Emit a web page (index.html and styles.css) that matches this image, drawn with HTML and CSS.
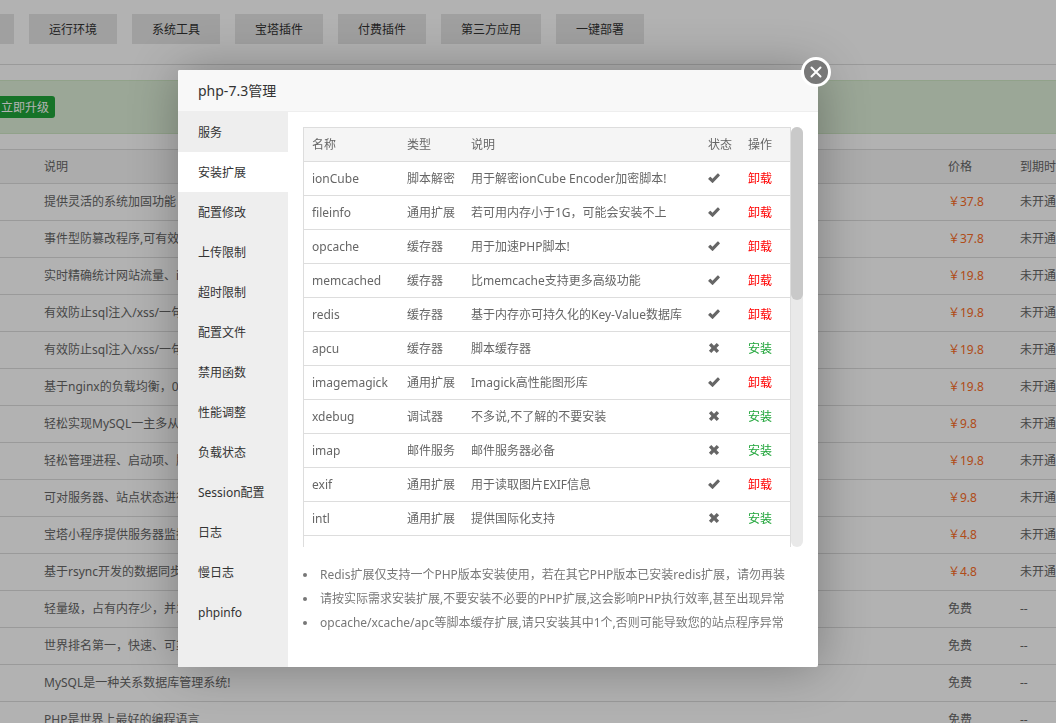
FILE: index.html
```html
<!DOCTYPE html>
<html lang="zh-CN">
<head>
<meta charset="utf-8">
<title>php-7.3管理</title>
<link rel="stylesheet" href="styles.css">
</head>
<body>
<svg class="sprite" aria-hidden="true">
  <symbol id="ok" viewBox="0 0 12 12"><path d="M.4 6.500 1.900 5q.4-.4.8 0l1.800 1.700L9.500 1.600q.4-.4.8 0l1.400 1.300q.4.4 0 .8L5 10.700q-.5.4-.9 0L.4 7.300q-.4-.4 0-.8Z"/></symbol>
  <symbol id="no" viewBox="0 0 12 12"><path d="M3.300 1 6 3.700 8.700 1 11.100 3.300 8.500 6l2.600 2.700L8.700 11 6 8.300 3.300 11 .9 8.700 3.500 6 .9 3.300Z"/></symbol>
</svg>
<main class="page">
  <nav class="tabs">
    <button class="tab tab-cut" aria-label="全部"></button>
    <button class="tab">运行环境</button>
    <button class="tab">系统工具</button>
    <button class="tab">宝塔插件</button>
    <button class="tab">付费插件</button>
    <button class="tab">第三方应用</button>
    <button class="tab">一键部署</button>
  </nav>
  <div class="alert"><button class="upgrade">立即升级</button></div>
  <table class="soft">
    <colgroup><col class="c-pad"><col><col class="c-price"><col class="c-end"></colgroup>
    <thead><tr><th></th><th>说明</th><th>价格</th><th>到期时间</th></tr></thead>
    <tbody>
      <tr><td></td><td>提供灵活的系统加固功能</td><td class="price">￥37.8</td><td>未开通</td></tr>
      <tr><td></td><td>事件型防篡改程序,可有效</td><td class="price">￥37.8</td><td>未开通</td></tr>
      <tr><td></td><td>实时精确统计网站流量、ip</td><td class="price">￥19.8</td><td>未开通</td></tr>
      <tr><td></td><td>有效防止sql注入/xss/一句话</td><td class="price">￥19.8</td><td>未开通</td></tr>
      <tr><td></td><td>有效防止sql注入/xss/一句话</td><td class="price">￥19.8</td><td>未开通</td></tr>
      <tr><td></td><td>基于nginx的负载均衡，0</td><td class="price">￥19.8</td><td>未开通</td></tr>
      <tr><td></td><td>轻松实现MySQL一主多从</td><td class="price">￥9.8</td><td>未开通</td></tr>
      <tr><td></td><td>轻松管理进程、启动项、服务</td><td class="price">￥19.8</td><td>未开通</td></tr>
      <tr><td></td><td>可对服务器、站点状态进行</td><td class="price">￥9.8</td><td>未开通</td></tr>
      <tr><td></td><td>宝塔小程序提供服务器监控</td><td class="price">￥4.8</td><td>未开通</td></tr>
      <tr><td></td><td>基于rsync开发的数据同步</td><td class="price">￥4.8</td><td>未开通</td></tr>
      <tr><td></td><td>轻量级，占有内存少，并发</td><td>免费</td><td>--</td></tr>
      <tr><td></td><td>世界排名第一，快速、可靠</td><td>免费</td><td>--</td></tr>
      <tr><td></td><td>MySQL是一种关系数据库管理系统!</td><td>免费</td><td>--</td></tr>
      <tr><td></td><td>PHP是世界上最好的编程语言</td><td>免费</td><td>--</td></tr>
    </tbody>
  </table>
</main>
<div class="shade"></div>
<section class="modal" role="dialog" aria-labelledby="title">
  <h2 class="title" id="title">php-7.3管理</h2>
  <button class="close" aria-label="关闭"><svg viewBox="0 0 30 30"><circle cx="15" cy="15" r="13.500"/><path d="m10.500 10.500 9 9m0-9-9 9"/></svg></button>
  <div class="body">
    <nav class="menu">
      <button>服务</button>
      <button class="on">安装扩展</button>
      <button>配置修改</button>
      <button>上传限制</button>
      <button>超时限制</button>
      <button>配置文件</button>
      <button>禁用函数</button>
      <button>性能调整</button>
      <button>负载状态</button>
      <button>Session配置</button>
      <button>日志</button>
      <button>慢日志</button>
      <button>phpinfo</button>
    </nav>
    <div class="content">
      <div class="scroller">
        <div class="frame">
          <table class="ext">
            <colgroup><col class="e-name"><col class="e-type"><col><col class="e-state"><col class="e-act"></colgroup>
            <thead><tr><th>名称</th><th>类型</th><th>说明</th><th>状态</th><th>操作</th></tr></thead>
            <tbody>
              <tr><td>ionCube</td><td>脚本解密</td><td>用于解密ionCube Encoder加密脚本!</td><td><svg class="mark"><use href="#ok"/></svg></td><td><a href="#" class="del">卸载</a></td></tr>
              <tr><td>fileinfo</td><td>通用扩展</td><td>若可用内存小于1G，可能会安装不上</td><td><svg class="mark"><use href="#ok"/></svg></td><td><a href="#" class="del">卸载</a></td></tr>
              <tr><td>opcache</td><td>缓存器</td><td>用于加速PHP脚本!</td><td><svg class="mark"><use href="#ok"/></svg></td><td><a href="#" class="del">卸载</a></td></tr>
              <tr><td>memcached</td><td>缓存器</td><td>比memcache支持更多高级功能</td><td><svg class="mark"><use href="#ok"/></svg></td><td><a href="#" class="del">卸载</a></td></tr>
              <tr><td>redis</td><td>缓存器</td><td>基于内存亦可持久化的Key-Value数据库</td><td><svg class="mark"><use href="#ok"/></svg></td><td><a href="#" class="del">卸载</a></td></tr>
              <tr><td>apcu</td><td>缓存器</td><td>脚本缓存器</td><td><svg class="mark"><use href="#no"/></svg></td><td><a href="#" class="add">安装</a></td></tr>
              <tr><td>imagemagick</td><td>通用扩展</td><td>Imagick高性能图形库</td><td><svg class="mark"><use href="#ok"/></svg></td><td><a href="#" class="del">卸载</a></td></tr>
              <tr><td>xdebug</td><td>调试器</td><td>不多说,不了解的不要安装</td><td><svg class="mark"><use href="#no"/></svg></td><td><a href="#" class="add">安装</a></td></tr>
              <tr><td>imap</td><td>邮件服务</td><td>邮件服务器必备</td><td><svg class="mark"><use href="#no"/></svg></td><td><a href="#" class="add">安装</a></td></tr>
              <tr><td>exif</td><td>通用扩展</td><td>用于读取图片EXIF信息</td><td><svg class="mark"><use href="#ok"/></svg></td><td><a href="#" class="del">卸载</a></td></tr>
              <tr><td>intl</td><td>通用扩展</td><td>提供国际化支持</td><td><svg class="mark"><use href="#no"/></svg></td><td><a href="#" class="add">安装</a></td></tr>
            </tbody>
          </table>
        </div>
        <div class="track"><div class="thumb"></div></div>
      </div>
      <ul class="notes">
        <li>Redis扩展仅支持一个PHP版本安装使用，若在其它PHP版本已安装redis扩展，请勿再装</li>
        <li>请按实际需求安装扩展,不要安装不必要的PHP扩展,这会影响PHP执行效率,甚至出现异常</li>
        <li>opcache/xcache/apc等脚本缓存扩展,请只安装其中1个,否则可能导致您的站点程序异常</li>
      </ul>
    </div>
  </div>
</section>
</body>
</html>
```
FILE: styles.css
```css
* { box-sizing: border-box; }
body {
  margin: 0;
  height: 100vh;
  overflow: hidden;
  background: #fff;
  color: #666;
  font: 12px/18px "Noto Sans", "Noto Sans CJK SC", sans-serif;
}
button { border: 0; margin: 0; font: inherit; color: inherit; cursor: pointer; }
a { text-decoration: none; }
.sprite { display: none; }

.tabs { display: flex; gap: 15px; padding: 14px 0 20px; border-bottom: 1px solid #ddd; }
.tab { height: 30px; padding: 2px 20px 0; background: #e6e6e6; color: #333; }
.tab-cut { width: 14px; padding: 0; }
.alert {
  display: flex;
  align-items: center;
  height: 54px;
  margin: 15px 0;
  background: #dff0d8;
  border: solid #d0e9c6;
  border-width: 1px 0;
}
.upgrade { height: 22px; padding: 2px 6px 0 1px; border-radius: 0 3px 3px 0; background: #20a53a; color: #fff; }

table { width: 100%; table-layout: fixed; border-spacing: 0; }
th, td { padding: 0 8px; text-align: left; font-weight: 400; white-space: nowrap; border-bottom: 1px solid #ddd; }
.soft th { height: 35px; background: #f6f6f6; border-top: 1px solid #ddd; }
.soft td { height: 37px; }
.c-pad { width: 36px; }
.c-price { width: 72px; }
.c-end { width: 44px; }
.soft .price { color: #fc6d26; }

.shade { position: fixed; inset: 0; background: rgba(0, 0, 0, .3); }
.modal {
  position: absolute;
  left: 178px;
  top: 70px;
  width: 640px;
  background: #fff;
  border-radius: 2px;
  box-shadow: 1px 1px 50px rgba(0, 0, 0, .3);
}
.title {
  margin: 0;
  padding: 0 20px;
  font-size: 14px;
  font-weight: 400;
  line-height: 41px;
  color: #333;
  background: #f8f8f8;
  border-bottom: 1px solid #eee;
  border-radius: 2px 2px 0 0;
}
.close { position: absolute; top: -13px; right: -13px; width: 30px; height: 30px; padding: 0; background: none; }
.close svg { display: block; width: 30px; height: 30px; fill: #787878; stroke: #fff; stroke-width: 3; }
.close path { stroke-width: 2; stroke-linecap: round; }
.body { display: flex; }
.menu { display: flex; flex-direction: column; width: 110px; padding-bottom: 35px; background: #eee; }
.menu button { height: 40px; padding: 2px 20px 0; text-align: left; background: none; color: #333; white-space: nowrap; }
.menu .on { background: #fff; }
.content { flex: 1; padding: 15px; }
.scroller { display: flex; height: 420px; }
.frame { flex: 1; overflow: hidden; border: 1px solid #ddd; border-bottom: 0; }
.ext th, .ext td { height: 34px; }
.ext th { background: #f5f5f5; }
.e-name { width: 95px; }
.e-type { width: 64px; }
.e-state { width: 40px; }
.e-act { width: 50px; }
.mark { display: block; width: 12px; height: 12px; margin-bottom: 2px; fill: #666; }
.del { color: #f00; }
.add { color: #20a53a; }
.track { width: 12px; background: #e9e9e9; border-radius: 6px; }
.thumb { height: 173px; background: #c9c9c9; border-radius: 6px; }
.notes { margin: 16px 0 0; padding: 0; list-style: none; line-height: 24px; color: #777; }
.notes li { display: flex; align-items: center; gap: 13px; white-space: nowrap; }
.notes li::before { content: ""; width: 4px; height: 4px; border-radius: 2px; background: #777; }
```
